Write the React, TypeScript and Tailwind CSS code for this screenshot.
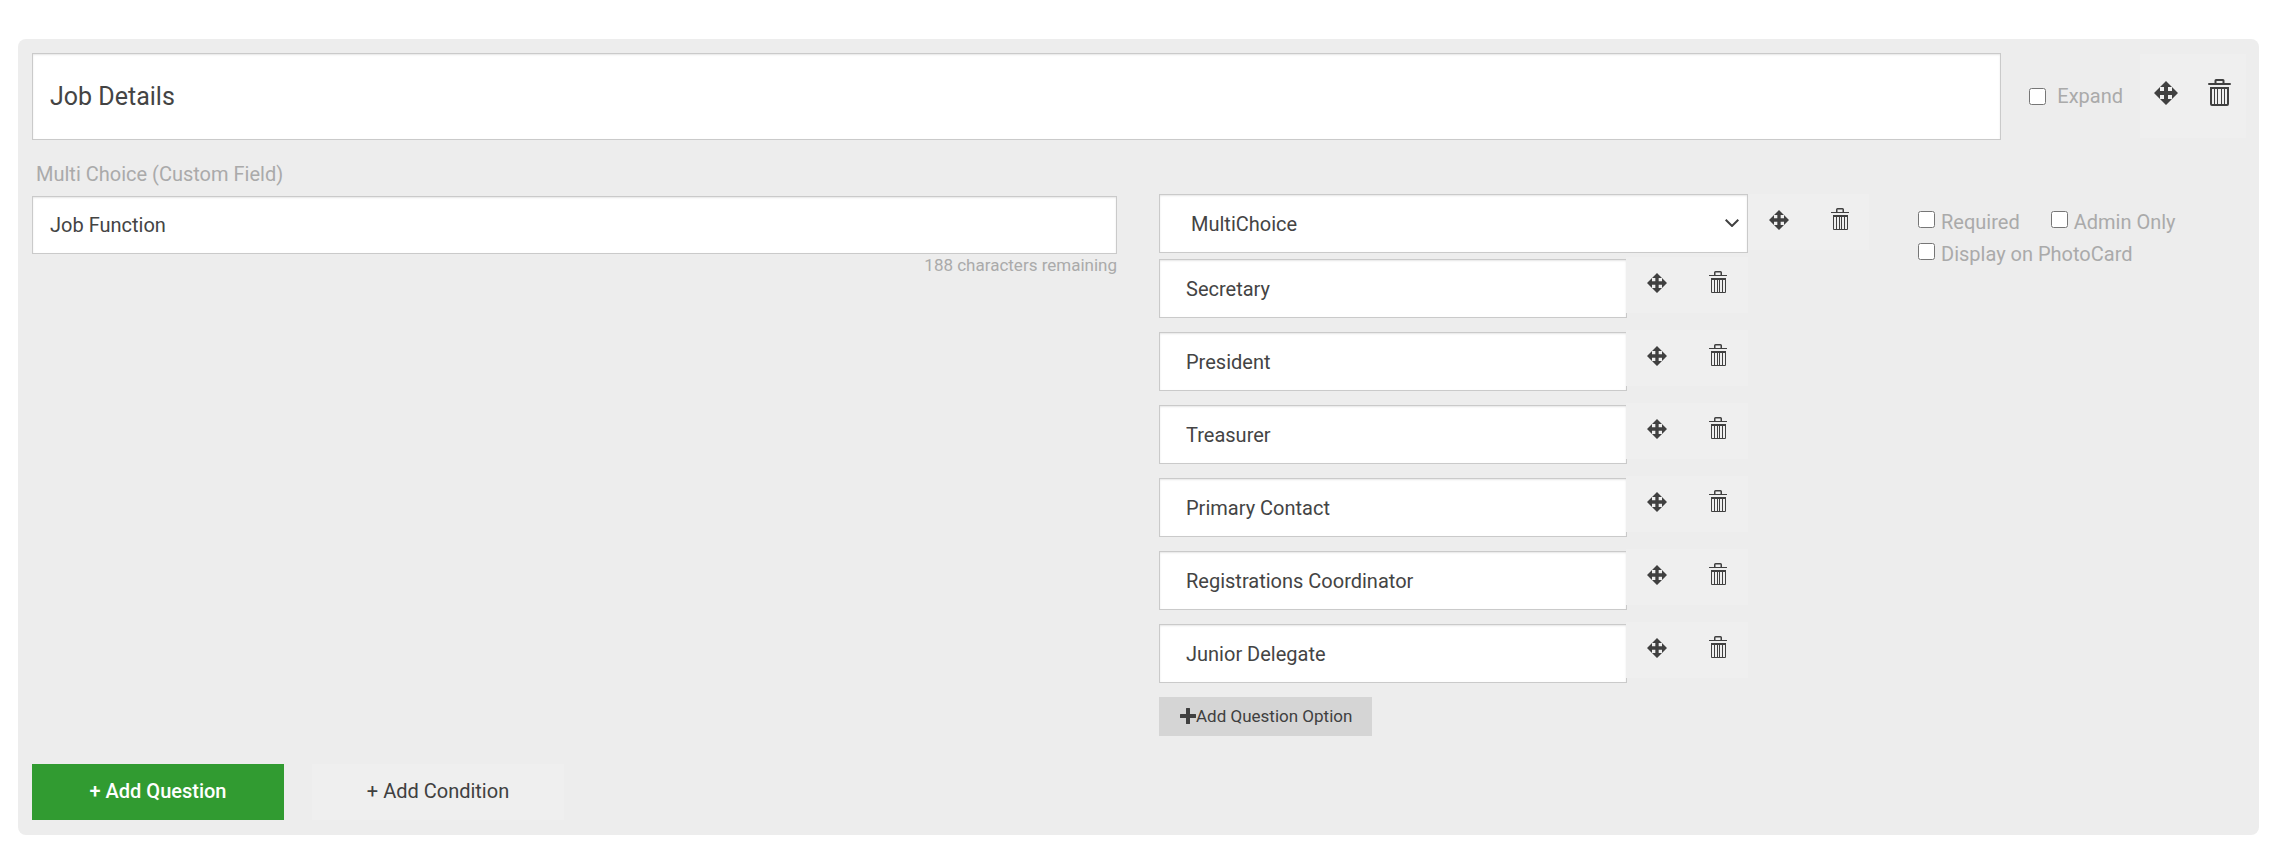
import React, { useState } from "react";

function MoveIcon({ className }: { className: string }) {
  return (
    <svg viewBox="0 0 24 24" fill="currentColor" className={className} aria-hidden="true">
      <path d="M12 0l6 6h-4v4h4V6l6 6-6 6v-4h-4v4h4l-6 6-6-6h4v-4H6v4l-6-6 6-6v4h4V6H6z" />
    </svg>
  );
}

function TrashIcon() {
  return (
    <svg viewBox="0 0 18 22" fill="currentColor" fillRule="evenodd" className="h-[22px] w-[18px]" aria-hidden="true">
      <path d="M5 4V1.500Q5 0 6.500 0h5Q13 0 13 1.500V4h-1.500V1.500h-5V4z" />
      <path d="M0 4h18v1H0z" />
      <path d="M2 7h15v14q0 1-1 1H3q-1 0-1-1zM3 9v12h2V9zM6 9v12h2V9zM9 9v12h1V9zM11 9v12h2V9zM14 9v12h2V9z" />
    </svg>
  );
}

function LargeTrashIcon() {
  return (
    <svg viewBox="0 0 23 27" fill="currentColor" fillRule="evenodd" className="h-[27px] w-[23px]" aria-hidden="true">
      <path d="M6.500 4V1.500Q6.500 0 8 0h7q1.500 0 1.500 1.500V4h-2V2h-6v2z" />
      <path d="M1 4h21q1 0 1 1t-1 1H1Q0 6 0 5t1-1z" />
      <path d="M2 8h19v17q0 2-2 2H4q-2 0-2-2zM4 10v15h2V10zM7 10v15h2V10zM10 10v15h3V10zM14 10v15h2V10zM17 10v15h2V10z" />
    </svg>
  );
}

function PlusIcon({ className }: { className: string }) {
  return (
    <svg viewBox="0 0 16 16" fill="currentColor" className={className} aria-hidden="true">
      <path d="M6.500 0h3q.5 0 .5.5V6h5.500q.5 0 .5.5v3q0 .5-.5.5H10v5.500q0 .5-.5.5h-3q-.5 0-.5-.5V10H.5Q0 10 0 9.500v-3Q0 6 .5 6H6V.5q0-.5.5-.5z" />
    </svg>
  );
}

interface RowActionsProps {
  name: string;
  className?: string;
}

function RowActions({ name, className = "" }: RowActionsProps) {
  return (
    <div className={`relative flex h-14 shrink-0 bg-[#efefef] ${className}`}>
      <button type="button" aria-label={`Move ${name}`} className="flex w-[61px] items-start pt-4 pl-[21px]">
        <MoveIcon className="size-5" />
      </button>
      <button type="button" aria-label={`Delete ${name}`} className="flex flex-1 items-start pt-[14px] pl-[22px]">
        <TrashIcon />
      </button>
    </div>
  );
}

interface CheckFieldProps {
  id: string;
  label: string;
}

function CheckField({ id, label }: CheckFieldProps) {
  return (
    <div className="flex items-start gap-1.5">
      <input id={id} type="checkbox" className="size-[17px]" />
      <label htmlFor={id} className="pt-px pb-0.5 text-xl leading-5">
        {label}
      </label>
    </div>
  );
}

const fieldStyle =
  "min-w-0 rounded-none border border-[#cacaca] bg-white text-[#444] shadow-[inset_0_1px_2px_rgba(10,10,10,0.1)] outline-none";

const initialOptions = [
  "Secretary",
  "President",
  "Treasurer",
  "Primary Contact",
  "Registrations Coordinator",
  "Junior Delegate",
];

export default function App() {
  const [options, setOptions] = useState(initialOptions);

  const updateOption = (index: number, value: string) => {
    setOptions(options.map((option, i) => (i === index ? value : option)));
  };

  return (
    <main className="pt-[39px] pr-[17px] pb-[22px] pl-[18px] font-[Roboto,sans-serif] text-[#404040]">
      <section className="rounded-lg bg-[#ededed] pt-[14px] pr-[13px] pb-[15px] pl-[14px]">
        <div className="flex">
          <input
            aria-label="Section title"
            defaultValue="Job Details"
            className={`h-[87px] flex-1 px-[17px] text-[25px] ${fieldStyle}`}
          />
          <div className="ml-7 flex items-center gap-[11px] text-[#aaa]">
            <input id="expand" type="checkbox" className="size-[17px]" />
            <label htmlFor="expand" className="pb-0.5 text-xl">
              Expand
            </label>
          </div>
          <div className="mt-px ml-[17px] flex h-[84px] w-[106px] bg-[#efefef]">
            <button type="button" aria-label="Move section" className="flex w-[53px] items-start pt-[27px] pl-[14px]">
              <MoveIcon className="size-6" />
            </button>
            <button type="button" aria-label="Delete section" className="flex flex-1 items-start pt-[25px] pl-[15px]">
              <LargeTrashIcon />
            </button>
          </div>
        </div>

        <div className="grid grid-cols-[1085fr_710fr_335fr] gap-[42px]">
          <div className="flex flex-col pt-5">
            <label htmlFor="question" className="pl-1 text-xl leading-7 text-[#aaa]">
              Multi Choice (Custom Field)
            </label>
            <input
              id="question"
              defaultValue="Job Function"
              className={`mt-2 h-[58px] px-[17px] text-xl ${fieldStyle}`}
            />
            <p className="text-right text-[17px] leading-[22px] text-[#aaa]">188 characters remaining</p>
          </div>

          <div className="pt-[54px]">
            <div className="flex">
              <div className="relative flex flex-1">
                <select
                  aria-label="Question type"
                  className={`h-[59px] flex-1 appearance-none pl-[31px] text-xl ${fieldStyle}`}
                >
                  <option>MultiChoice</option>
                </select>
                <svg
                  viewBox="0 0 14 8"
                  fill="none"
                  stroke="currentColor"
                  strokeWidth="2"
                  className="pointer-events-none absolute top-[25px] right-[9px] h-2 w-[14px]"
                  aria-hidden="true"
                >
                  <path d="M.7.7L7 7l6.300-6.300" />
                </svg>
              </div>
              <RowActions name="question" className="w-[121px]" />
            </div>

            <div className="mt-1.5 mr-[121px] space-y-[14px]">
              {options.map((option, index) => (
                <div key={index} className="flex">
                  <input
                    aria-label={`Option ${index + 1}`}
                    value={option}
                    onChange={(e) => updateOption(index, e.target.value)}
                    className={`h-[59px] flex-1 px-[26px] text-xl ${fieldStyle}`}
                  />
                  <RowActions name={option} className="-mt-[2px] -ml-px w-[122px]" />
                </div>
              ))}
            </div>

            <button
              type="button"
              onClick={() => setOptions([...options, ""])}
              className="mt-[14px] flex h-[39px] items-center bg-[#d5d5d5] pr-5 pl-[21px] text-[17px]"
            >
              <PlusIcon className="mb-0.5 size-4" />
              Add Question Option
            </button>
          </div>

          <div className="flex flex-wrap content-start gap-x-[31px] gap-y-[9px] pt-[71px] pl-[7px] text-[#aaa]">
            <CheckField id="required" label="Required" />
            <CheckField id="admin-only" label="Admin Only" />
            <CheckField id="photocard" label="Display on PhotoCard" />
          </div>
        </div>

        <div className="mt-7 flex gap-7 text-xl">
          <button type="button" className="h-14 w-[252px] bg-[#319b31] pb-0.5 font-medium text-white">
            + Add Question
          </button>
          <button type="button" className="h-14 w-[252px] bg-[#efefef] pb-0.5">
            + Add Condition
          </button>
        </div>
      </section>
    </main>
  );
}
